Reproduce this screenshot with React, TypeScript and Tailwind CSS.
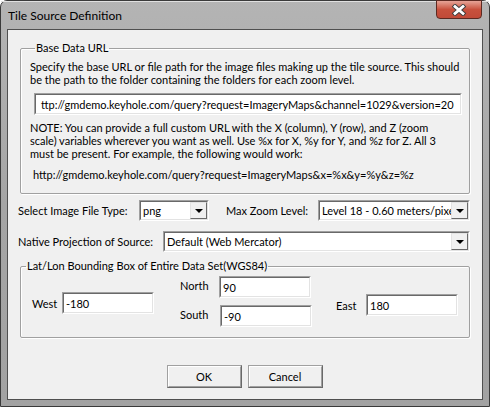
import React from "react";

function Sunken({ className, children }: { className: string; children?: React.ReactNode }) {
  return (
    <div className={"min-w-0 shrink-0 border border-t-[#a0a0a0] border-l-[#a0a0a0] border-r-white border-b-white " + className}>
      <div className="h-full border border-t-[#696969] border-l-[#696969] border-r-[#e3e3e3] border-b-[#e3e3e3] bg-white flex items-center pl-[2px] overflow-hidden whitespace-nowrap">
        {children}
      </div>
    </div>
  );
}

function Combo({ value, className }: { value: string; className: string }) {
  return (
    <Sunken className={className}>
      <span className="flex-1 min-w-0 overflow-hidden">{value}</span>
      <div className="w-[17px] shrink-0 h-full border border-t-[#e3e3e3] border-l-[#e3e3e3] border-r-[#696969] border-b-[#696969] bg-[#f0f0f0] flex items-center justify-center">
        <svg width="8" height="4" viewBox="0 0 8 4">
          <path d="M0 0h8L4 4z" fill="#000" />
        </svg>
      </div>
    </Sunken>
  );
}

function Btn({ label }: { label: string }) {
  return (
    <button className="w-[75px] h-[23px] border border-t-[#a0a0a0] border-l-[#a0a0a0] border-r-[#696969] border-b-[#696969] bg-[#f0f0f0]">
      <div className="h-full border border-t-white border-l-white border-r-[#a0a0a0] border-b-[#a0a0a0] flex items-center justify-center">
        {label}
      </div>
    </button>
  );
}

export default function App() {
  return (
    <div className="w-[490px] h-[407px] flex flex-col bg-gradient-to-b from-[#b4b4b4] via-[#a5a5a5] to-[#a2a2a2] border border-[#3a3a3a] rounded-t-[7px] font-['Lato',sans-serif] text-[11px] text-black leading-[13px]">
      {/* title bar */}
      <div className="h-[28px] flex justify-between pl-[7px] pr-[7px] shadow-[inset_0_1px_0_#e0e0e0]">
        <span className="mt-[8px] leading-[14px] text-[12px]">Tile Source Definition</span>
        <div className="w-[46px] h-[19px] -mt-px rounded-b-[4px] border border-[#5c2a22] bg-gradient-to-b from-[#e6a497] via-[#c8513d] to-[#c14a38] flex items-center justify-center">
          <svg width="16" height="12" viewBox="0 0 16 12">
            <path d="M4 2.5l8 7M12 2.5l-8 7" stroke="#3b3b3b" strokeWidth="4.6" strokeLinecap="square" />
            <path d="M4 2.5l8 7M12 2.5l-8 7" stroke="#fff" strokeWidth="2.8" strokeLinecap="square" />
          </svg>
        </div>
      </div>

      {/* client area */}
      <div className="flex-1 min-w-0 mx-[6px] mb-[6px] border border-[#4f4f4f] bg-[#f0f0f0] flex flex-col px-[12px] pt-[11px]">
        <fieldset className="min-w-0 border border-[#a0a0a0] shadow-[inset_1px_1px_0_#fff,1px_1px_0_#fff] rounded-[2px] pl-[9px] pr-[8px] pb-[12px]">
          <legend className="px-[1px] ml-[5px] leading-[14px]">Base Data URL</legend>
          <p className="mt-[5px]">
            Specify the base URL or file path for the image files making up the tile source. This should
            <br />
            be the path to the folder containing the folders for each zoom level.
          </p>
          <Sunken className="mt-[7px] h-[22px] ml-[4px] mr-[-1px]">
            <span className="pl-[3px]">ttp://gmdemo.keyhole.com/query?request=ImageryMaps&amp;channel=1029&amp;version=20</span>
          </Sunken>
          <p className="mt-[6px] whitespace-nowrap">
            NOTE: You can provide a full custom URL with the X (column), Y (row), and Z (zoom
            <br />
            scale) variables wherever you want as well. Use %x for X, %y for Y, and %z for Z. All 3
            <br />
            must be present. For example, the following would work:
          </p>
          <p className="mt-[8px] pl-[3px] whitespace-nowrap">http://gmdemo.keyhole.com/query?request=ImageryMaps&amp;x=%x&amp;y=%y&amp;z=%z</p>
        </fieldset>

        <div className="mt-[6px] flex items-center h-[21px] whitespace-nowrap">
          <span className="w-[121px] shrink-0 -ml-[2px]">Select Image File Type:</span>
          <Combo value="png" className="w-[70px] h-[21px]" />
          <span className="ml-[17px] w-[92px] shrink-0">Max Zoom Level:</span>
          <Combo value="Level 18 - 0.60 meters/pixel" className="flex-1 h-[21px]" />
        </div>

        <div className="mt-[10px] flex items-center h-[21px] whitespace-nowrap">
          <span className="w-[145px] shrink-0 -ml-[2px]">Native Projection of Source:</span>
          <Combo value="Default (Web Mercator)" className="flex-1 h-[21px]" />
        </div>

        <fieldset className="min-w-0 mt-[7px] border border-[#a0a0a0] shadow-[inset_1px_1px_0_#fff,1px_1px_0_#fff] rounded-[2px] h-[79px] flex">
          <legend className="px-[1px] ml-[5px] leading-[14px]">Lat/Lon Bounding Box of Entire Data Set(WGS84)</legend>
          <div className="flex items-start pl-[11px]">
            <div className="flex items-center mt-[19px]">
              <span className="w-[30px]">West</span>
              <Sunken className="w-[92px] h-[22px]">-180</Sunken>
            </div>
            <div className="flex flex-col ml-[26px] mt-[3px] gap-[7px]">
              <div className="flex items-center">
                <span className="w-[39px] -mt-[4px]">North</span>
                <Sunken className="w-[92px] h-[22px]">90</Sunken>
              </div>
              <div className="flex items-center">
                <span className="w-[40px] -mt-[4px]">South</span>
                <Sunken className="w-[92px] h-[22px]">-90</Sunken>
              </div>
            </div>
            <div className="flex items-center mt-[21px] ml-[24px]">
              <span className="w-[30px]">East</span>
              <Sunken className="w-[92px] h-[22px]">180</Sunken>
            </div>
          </div>
        </fieldset>

        <div className="mt-[27px] flex justify-center gap-[6px] pr-[1px]">
          <Btn label="OK" />
          <Btn label="Cancel" />
        </div>
      </div>
    </div>
  );
}
